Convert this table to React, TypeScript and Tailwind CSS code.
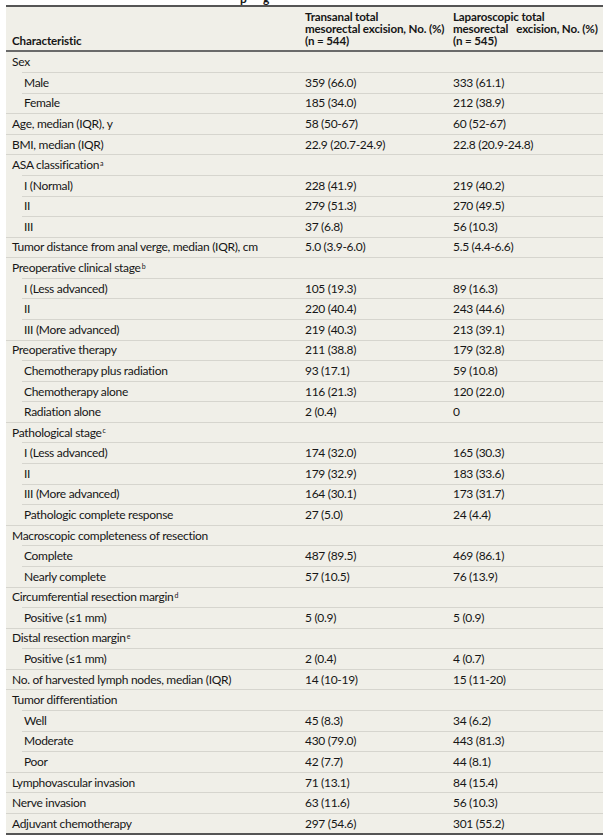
type Row = { label: string; sup?: string; a?: string; b?: string; sub?: boolean };

const rows: Row[] = [
  { label: 'Sex' },
  { label: 'Male', a: '359 (66.0)', b: '333 (61.1)', sub: true },
  { label: 'Female', a: '185 (34.0)', b: '212 (38.9)', sub: true },
  { label: 'Age, median (IQR), y', a: '58 (50-67)', b: '60 (52-67)' },
  { label: 'BMI, median (IQR)', a: '22.9 (20.7-24.9)', b: '22.8 (20.9-24.8)' },
  { label: 'ASA classification', sup: 'a' },
  { label: 'I (Normal)', a: '228 (41.9)', b: '219 (40.2)', sub: true },
  { label: 'II', a: '279 (51.3)', b: '270 (49.5)', sub: true },
  { label: 'III', a: '37 (6.8)', b: '56 (10.3)', sub: true },
  { label: 'Tumor distance from anal verge, median (IQR), cm', a: '5.0 (3.9-6.0)', b: '5.5 (4.4-6.6)' },
  { label: 'Preoperative clinical stage', sup: 'b' },
  { label: 'I (Less advanced)', a: '105 (19.3)', b: '89 (16.3)', sub: true },
  { label: 'II', a: '220 (40.4)', b: '243 (44.6)', sub: true },
  { label: 'III (More advanced)', a: '219 (40.3)', b: '213 (39.1)', sub: true },
  { label: 'Preoperative therapy', a: '211 (38.8)', b: '179 (32.8)' },
  { label: 'Chemotherapy plus radiation', a: '93 (17.1)', b: '59 (10.8)', sub: true },
  { label: 'Chemotherapy alone', a: '116 (21.3)', b: '120 (22.0)', sub: true },
  { label: 'Radiation alone', a: '2 (0.4)', b: '0', sub: true },
  { label: 'Pathological stage', sup: 'c' },
  { label: 'I (Less advanced)', a: '174 (32.0)', b: '165 (30.3)', sub: true },
  { label: 'II', a: '179 (32.9)', b: '183 (33.6)', sub: true },
  { label: 'III (More advanced)', a: '164 (30.1)', b: '173 (31.7)', sub: true },
  { label: 'Pathologic complete response', a: '27 (5.0)', b: '24 (4.4)', sub: true },
  { label: 'Macroscopic completeness of resection' },
  { label: 'Complete', a: '487 (89.5)', b: '469 (86.1)', sub: true },
  { label: 'Nearly complete', a: '57 (10.5)', b: '76 (13.9)', sub: true },
  { label: 'Circumferential resection margin', sup: 'd' },
  { label: 'Positive (≤1 mm)', a: '5 (0.9)', b: '5 (0.9)', sub: true },
  { label: 'Distal resection margin', sup: 'e' },
  { label: 'Positive (≤1 mm)', a: '2 (0.4)', b: '4 (0.7)', sub: true },
  { label: 'No. of harvested lymph nodes, median (IQR)', a: '14 (10-19)', b: '15 (11-20)' },
  { label: 'Tumor differentiation' },
  { label: 'Well', a: '45 (8.3)', b: '34 (6.2)', sub: true },
  { label: 'Moderate', a: '430 (79.0)', b: '443 (81.3)', sub: true },
  { label: 'Poor', a: '42 (7.7)', b: '44 (8.1)', sub: true },
  { label: 'Lymphovascular invasion', a: '71 (13.1)', b: '84 (15.4)' },
  { label: 'Nerve invasion', a: '63 (11.6)', b: '56 (10.3)' },
  { label: 'Adjuvant chemotherapy', a: '297 (54.6)', b: '301 (55.2)' },
];

export default function App() {
  return (
    <div className="w-[603px] bg-white pl-[6px] text-[12px] tracking-[-0.3px] text-[#161616]" style={{ fontFamily: 'Lato, "Noto Sans", sans-serif' }}>
      {/* caption above the table, cut off by the screenshot */}
      <div className="relative h-[5px] overflow-hidden">
        <span className="absolute left-[234px] top-[-10px] text-[12px] font-bold">p</span>
        <span className="absolute left-[257px] top-[-10px] text-[12px] font-bold">g</span>
      </div>
      <div className="bg-[#f0efe8]">
        <div className="h-[2px] bg-[#555]" />
        <div className="flex h-[43px] items-end pb-[3px] text-[11.6px] font-bold leading-[12px] tracking-[-0.15px]">
          <div className="w-[299px] pl-[6px]">Characteristic</div>
          <div className="w-[148px]">
            Transanal total
            <br />
            mesorectal excision, No. (%)
            <br />
            (n = 544)
          </div>
          <div className="flex-1">
            Laparoscopic total
            <br />
            mesorectal&nbsp;&nbsp; excision, No. (%)
            <br />
            (n = 545)
          </div>
        </div>
        <div className="h-[1.5px] bg-[#6a6a6a]" />
        {rows.map((r, i) => (
          <div key={i} className="flex h-[20.58px] flex-col">
            {i > 0 && <div className={`h-px bg-[#d6d5ce] ${r.sub ? 'ml-[16px]' : ''}`} />}
            <div className="flex flex-1 items-center">
              <div className={`w-[299px] ${r.sub ? 'pl-[18px]' : 'pl-[6px]'}`}>
                {r.label}
                {r.sup && <sup className="ml-[1px] text-[7px]">{r.sup}</sup>}
              </div>
              <div className="w-[148px]">{r.a}</div>
              <div className="flex-1">{r.b}</div>
            </div>
          </div>
        ))}
        <div className="h-[2px] bg-[#555]" />
      </div>
    </div>
  );
}
